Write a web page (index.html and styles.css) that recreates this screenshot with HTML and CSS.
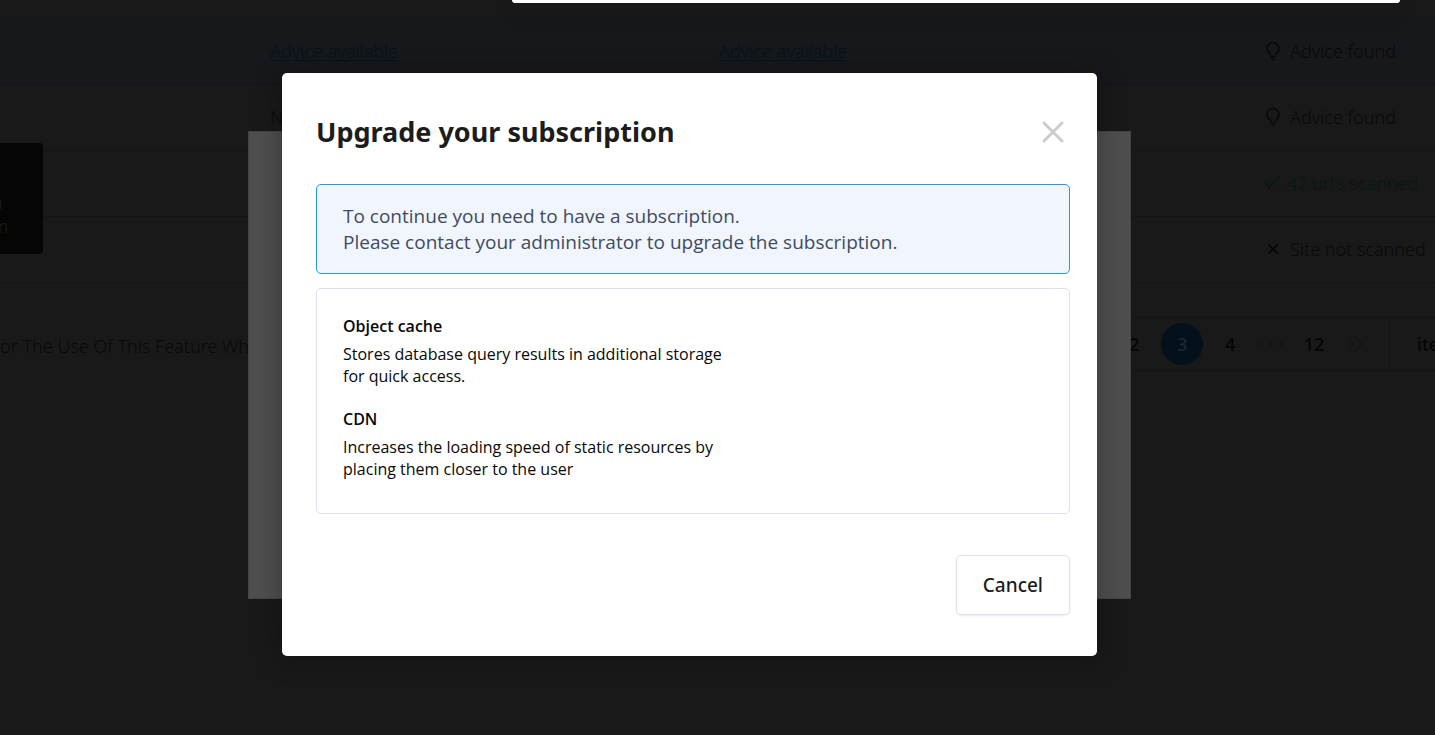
FILE: index.html
```html
<!DOCTYPE html>
<html lang="en">
<head>
<meta charset="utf-8">
<title>Upgrade your subscription</title>
<link rel="stylesheet" href="styles.css">
</head>
<body>
<main class="page">
  <table class="sites">
    <colgroup><col class="col-name"><col class="col-wide"><col><col class="col-status"></colgroup>
    <tbody>
      <tr class="row-head"><td></td><td></td><td><span class="till">Available till March 2025</span></td><td></td></tr>
      <tr class="row-active">
        <td></td>
        <td><a href="#">Advice available</a></td>
        <td><a href="#">Advice available</a></td>
        <td><span class="status"><svg class="icon" viewBox="0 0 20 20"><path d="M7.500 14.500v-1.200C5.600 12 4 10.300 4 7.600a6 6 0 0 1 12 0c0 2.700-1.600 4.400-3.500 5.700v1.200M7 15.800h6M8.300 18.200h3.400"/></svg>Advice found</span></td>
      </tr>
      <tr>
        <td></td><td>N/A</td><td></td>
        <td><span class="status"><svg class="icon" viewBox="0 0 20 20"><path d="M7.500 14.500v-1.200C5.600 12 4 10.300 4 7.600a6 6 0 0 1 12 0c0 2.700-1.600 4.400-3.500 5.700v1.200M7 15.800h6M8.300 18.200h3.400"/></svg>Advice found</span></td>
      </tr>
      <tr>
        <td></td><td></td><td></td>
        <td><span class="status status-ok"><svg class="icon" viewBox="0 0 20 20"><path d="M1.500 10l4.500 4.500L16.500 3.500"/></svg>42 url’s scanned</span></td>
      </tr>
      <tr>
        <td></td><td></td><td></td>
        <td><span class="status"><svg class="icon icon-cross" viewBox="0 0 20 20"><path d="M5.500 5.500l9 9M14.500 5.500l-9 9"/></svg>Site not scanned</span></td>
      </tr>
    </tbody>
  </table>
  <footer class="foot">
    <p class="note">For The Use Of This Feature Wh</p>
    <nav class="pager" aria-label="Pages">
      <button class="num">2</button>
      <button class="num current">3</button>
      <button class="num">4</button>
      <span class="dots"><i></i><i></i><i></i></span>
      <button class="num">12</button>
      <button class="next" aria-label="Last page"><svg class="icon" viewBox="0 0 20 20"><path d="M3 4l6 6-6 6M11 4l6 6-6 6"/></svg></button>
      <span class="per-page">items</span>
    </nav>
  </footer>
</main>
<aside class="tip"><p>n<br>m</p></aside>
<div class="top-panel"></div>
<div class="layer"><div class="under-panel"></div></div>
<div class="layer">
  <section class="dialog" role="dialog" aria-labelledby="dialog-title">
    <header class="dialog-head">
      <h1 id="dialog-title">Upgrade your subscription</h1>
      <button class="close" aria-label="Close"><svg viewBox="0 0 26 26"><path d="M4 4l18 18M22 4L4 22"/></svg></button>
    </header>
    <p class="alert">To continue you need to have a subscription.<br>Please contact your administrator to upgrade the subscription.</p>
    <div class="features">
      <h2>Object cache</h2>
      <p>Stores database query results in additional storage for quick access.</p>
      <h2>CDN</h2>
      <p>Increases the loading speed of static resources by placing them closer to the user</p>
    </div>
    <footer class="actions"><button class="cancel">Cancel</button></footer>
  </section>
</div>
</body>
</html>
```
FILE: styles.css
```css
* { box-sizing: border-box; }
body {
  margin: 0;
  min-height: 100vh;
  overflow: hidden;
  background: #191919;
  color: #090909;
  font: 18px/24px "Noto Sans", sans-serif;
}
h1, h2, p { margin: 0; }
button { padding: 0; border: 0; background: none; color: inherit; font: inherit; }
.page { overflow: hidden; font-weight: 300; }

.sites { width: 100%; table-layout: fixed; border-collapse: collapse; }
.col-name { width: 270px; }
.col-wide { width: 449px; }
.col-status { width: 172px; }
.sites td { height: 66px; padding: 0; border-bottom: 1px solid #151515; white-space: nowrap; }
.sites .row-head td { height: 18px; line-height: 18px; border: 0; vertical-align: top; }
.till { display: block; height: 18px; margin-top: -13px; font-size: 16px; }
.row-active { background: #16181b; }
.sites a { color: #06131f; text-underline-offset: 2px; text-decoration-thickness: 1px; }
.status { display: flex; align-items: center; gap: 7px; }
.status-ok { gap: 4px; color: #07180e; }
.icon { width: 20px; height: 20px; fill: none; stroke: currentColor; stroke-width: 1.5; }
.icon-cross { color: #030303; }

.foot { display: flex; justify-content: space-between; padding-top: 34px; }
.note { margin-left: -9px; padding-top: 17px; white-space: nowrap; }
.pager {
  display: flex;
  align-items: center;
  height: 54px;
  margin-right: -60px;
  border: 1px solid #141414;
  border-width: 1px 0;
  color: #050505;
  font-weight: 500;
}
.num { min-width: 42px; height: 42px; }
.num.current { margin: 0 6px; border-radius: 50%; background: #04111d; color: #20272d; }
.dots { display: flex; gap: 7px; margin: 0 10px 0 6px; }
.dots i { width: 4px; height: 4px; border-radius: 50%; background: #151515; }
.next { display: flex; margin: 0 24px 0 10px; color: #151515; }
.per-page { display: flex; align-items: center; align-self: stretch; padding: 0 30px 0 27px; border-left: 1px solid #141414; }

.tip {
  position: absolute;
  top: 143px;
  left: 0;
  width: 43px;
  height: 111px;
  padding: 47px 35px 0 0;
  border-radius: 0 4px 4px 0;
  background: #050505;
  color: #1c1c1c;
  font-weight: 300;
}
.tip p { display: flex; justify-content: flex-end; }
.top-panel {
  position: absolute;
  top: 0;
  left: 512px;
  right: 35px;
  height: 3px;
  border-radius: 0 0 4px 4px;
  background: #fff;
  box-shadow: 0 8px 24px rgba(0, 0, 0, .2);
}
.layer {
  position: absolute;
  inset: 0 56px 0 0;
  display: flex;
  align-items: center;
  justify-content: center;
  pointer-events: none;
}
.under-panel { width: 883px; height: 468px; margin-bottom: 5px; border: 1px solid #444; background: #4e4e4e; }
.dialog {
  width: 815px;
  margin-bottom: 6px;
  padding: 34px 27px 41px 34px;
  border-radius: 5px;
  background: #fff;
  box-shadow: 0 2px 28px rgba(0, 0, 0, .3);
  color: #1c1c1c;
  pointer-events: auto;
}
.dialog-head { display: flex; align-items: center; justify-content: space-between; margin-bottom: 27px; }
h1 { font-size: 27px; line-height: 50px; }
.close { display: flex; margin-right: 4px; }
.close svg { width: 26px; height: 26px; fill: none; stroke: #ccc; stroke-width: 3; stroke-linecap: round; }
.alert {
  padding: 18px 26px;
  border: 1px solid #2196f3;
  border-radius: 5px;
  background: #f0f5fe;
  color: #414b5e;
  font-family: "Open Sans", sans-serif;
  font-size: 19px;
  line-height: 26px;
}
.features {
  margin-top: 14px;
  padding: 26px 26px 33px;
  border: 1px solid #e0e0ec;
  border-radius: 5px;
  color: #080808;
  font: 16px/22px "Open Sans", sans-serif;
}
.features p { max-width: 400px; }
h2 { margin-bottom: 6px; font-size: 16px; line-height: 22px; font-weight: 600; }
.features p + h2 { margin-top: 21px; }
.actions { display: flex; justify-content: flex-end; margin-top: 41px; }
.cancel {
  padding: 16px 26px;
  border: 1px solid #e0e0ec;
  border-radius: 5px;
  box-shadow: 0 1px 2px rgba(0, 0, 0, .08);
  font-size: 19px;
  line-height: 26px;
  font-weight: 500;
}
```
